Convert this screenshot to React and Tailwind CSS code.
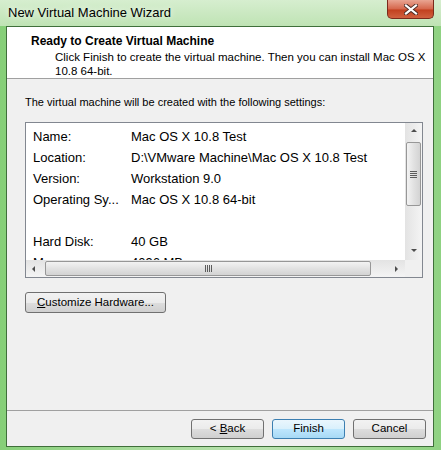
import { Fragment } from "react";

const rows = [
  ["Name:", "Mac OS X 10.8 Test"],
  ["Location:", "D:\\VMware Machine\\Mac OS X 10.8 Test"],
  ["Version:", "Workstation 9.0"],
  ["Operating Sy...", "Mac OS X 10.8 64-bit"],
  ["", ""],
  ["Hard Disk:", "40 GB"],
  ["Memory:", "4096 MB"],
  ["Network Adapter:", "NAT"],
];

function WinButton({ children, primary, className = "" }) {
  return (
    <button
      className={
        "h-[20px] rounded-[3px] border text-[11.5px] leading-none text-black " +
        (primary
          ? "border-[#3c7fb1] bg-[linear-gradient(#eaf6fd_0%,#d9f0fc_50%,#bee6fd_51%,#a7d9f5_100%)] "
          : "border-[#707070] bg-[linear-gradient(#f2f2f2_0%,#ebebeb_50%,#dddddd_51%,#cfcfcf_100%)] ") +
        className
      }
    >
      {children}
    </button>
  );
}

function ScrollArrow({ dir }) {
  const pts = {
    up: "2,5 5,2 8,5",
    down: "2,2 5,5 8,2",
    left: "5,2 2,5 5,8",
    right: "3,2 6,5 3,8",
  };
  return (
    <svg width="10" height="10" viewBox="0 0 10 10">
      <polygon points={pts[dir]} fill="#4d4d4d" />
    </svg>
  );
}

export default function App() {
  return (
    <div
      className="w-[441px] h-[450px] flex flex-col bg-[linear-gradient(90deg,#86cf78,#a8dc9c_30%,#b9e2ae_60%,#8fd282)]"
      style={{ fontFamily: "'Liberation Sans', Arial, sans-serif" }}
    >
      {/* title bar */}
      <div className="h-[26px] flex items-start justify-between pl-[8px] pr-[7px] bg-[linear-gradient(#d6eecf,#bfe3b4)]">
        <span
          className="mt-[4px] text-[13px] leading-[17px] text-black"
          style={{ textShadow: "0 0 6px #ffffff" }}
        >
          New Virtual Machine Wizard
        </span>
        <div className="w-[47px] h-[19px] rounded-b-[5px] border border-t-0 border-[#7b2a1c] bg-[linear-gradient(#e9a592,#d5664b_50%,#c2401f_55%,#d0613f)] flex items-center justify-center">
          <svg width="14" height="11" viewBox="0 0 14 11">
            <path d="M2 1.5 L12 9.5 M12 1.5 L2 9.5" stroke="#4b2b24" strokeWidth="4" strokeLinecap="square" />
            <path d="M2 1.5 L12 9.5 M12 1.5 L2 9.5" stroke="#ffffff" strokeWidth="2.2" strokeLinecap="square" />
          </svg>
        </div>
      </div>

      {/* client */}
      <div className="ml-[6px] mr-[7px] mb-[3px] flex-1 flex flex-col border border-[#3f6f3a] bg-[#f0f0f0] text-[11px] text-black">
        <div className="h-[52px] bg-white border-b border-[#a0a0a0] pl-[24px] pt-[7px]">
          <div className="font-bold text-[12px] leading-[15px]">Ready to Create Virtual Machine</div>
          <div className="pl-[24px] text-[11.5px] leading-[14px] mt-[1px] whitespace-nowrap">
            Click Finish to create the virtual machine. Then you can install Mac OS X
            <br />
            10.8 64-bit.
          </div>
        </div>

        <div className="flex-1 flex flex-col px-[18px]">
          <div className="mt-[16px] leading-[15px]">
            The virtual machine will be created with the following settings:
          </div>

          {/* list box */}
          <div className="mt-[12px] w-[398px] h-[156px] border border-[#828790] bg-white grid grid-cols-[1fr_17px] grid-rows-[1fr_17px] text-[13px]">
            <div className="overflow-hidden pl-[7px] pt-[3px]">
              <div className="grid grid-cols-[98px_max-content] leading-[21px] whitespace-nowrap">
                {rows.map(([k, v], i) => (
                  <Fragment key={i}>
                    <span className="h-[21px]">{k}</span>
                    <span className="h-[21px]">{v}</span>
                  </Fragment>
                ))}
              </div>
            </div>

            {/* vertical scrollbar */}
            <div className="bg-[linear-gradient(90deg,#e3e3e3,#f4f4f4)] flex flex-col items-center">
              <div className="h-[17px] flex items-center justify-center">
                <ScrollArrow dir="up" />
              </div>
              <div className="mt-[2px] w-[15px] h-[64px] rounded-[2px] border border-[#979797] bg-[linear-gradient(90deg,#f3f3f3,#e2e2e2_50%,#d3d3d3)] flex flex-col items-center justify-center gap-[1px]">
                <div className="w-[7px] h-[1px] bg-[#5c5c5c]" />
                <div className="w-[7px] h-[1px] bg-[#5c5c5c]" />
                <div className="w-[7px] h-[1px] bg-[#5c5c5c]" />
                <div className="w-[7px] h-[1px] bg-[#5c5c5c]" />
              </div>
              <div className="flex-1" />
              <div className="h-[17px] flex items-center justify-center">
                <ScrollArrow dir="down" />
              </div>
            </div>

            {/* horizontal scrollbar */}
            <div className="bg-[linear-gradient(#e3e3e3,#f4f4f4)] flex items-center">
              <div className="w-[17px] flex items-center justify-center">
                <ScrollArrow dir="left" />
              </div>
              <div className="ml-[2px] w-[326px] h-[15px] rounded-[2px] border border-[#979797] bg-[linear-gradient(#f3f3f3,#e2e2e2_50%,#d3d3d3)] flex items-center justify-center gap-[1px]">
                <div className="w-[1px] h-[7px] bg-[#5c5c5c]" />
                <div className="w-[1px] h-[7px] bg-[#5c5c5c]" />
                <div className="w-[1px] h-[7px] bg-[#5c5c5c]" />
                <div className="w-[1px] h-[7px] bg-[#5c5c5c]" />
              </div>
              <div className="flex-1" />
              <div className="w-[17px] flex items-center justify-center">
                <ScrollArrow dir="right" />
              </div>
            </div>
            <div className="bg-[#f0f0f0]" />
          </div>

          <div className="mt-[14px]">
            <WinButton className="w-[141px] h-[21px]">
              <span className="underline">C</span>ustomize Hardware...
            </WinButton>
          </div>
        </div>

        {/* footer */}
        <div className="h-[36px] border-t border-[#a0a0a0] flex items-start justify-end gap-[8px] pr-[7px] pt-[8px]">
          <WinButton className="w-[73px]">
            &lt; <span className="underline">B</span>ack
          </WinButton>
          <WinButton primary className="w-[73px]">
            Finish
          </WinButton>
          <WinButton className="w-[73px]">Cancel</WinButton>
        </div>
      </div>
    </div>
  );
}
